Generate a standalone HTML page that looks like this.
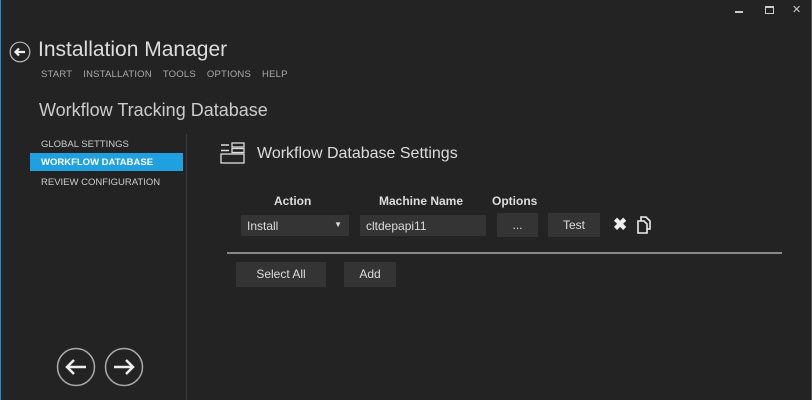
<!DOCTYPE html>
<html><head><style>
body{margin:0;width:812px;height:400px;background:#222322;overflow:hidden;position:relative;font-family:"Liberation Sans",sans-serif;color:#ddd}
.a{position:absolute}
.nav span{margin-right:11px}
.btn{position:absolute;background:#333433;color:#ddd;font-size:12px;text-align:center}
</style></head><body>
<div class="a" style="left:0;top:0;width:1px;height:400px;background:#1e8fd6"></div>
<div class="a" style="right:0;top:0;width:1px;height:400px;background:#555"></div>
<div class="a" style="left:735px;top:11px;width:8px;height:2px;background:#ccc"></div>
<div class="a" style="left:765px;top:6px;width:7px;height:5px;border:1px solid #ccc;border-top-width:2px"></div>
<div class="a" style="left:792px;top:3px;font-size:11px;color:#ccc">✕</div>
<svg class="a" style="left:9px;top:41px" width="22" height="22" viewBox="0 0 22 22"><circle cx="11" cy="11" r="9.8" fill="none" stroke="#bbb" stroke-width="1.2"/><path d="M16 11H6.5M10 7.5L6.5 11l3.5 3.5" fill="none" stroke="#eee" stroke-width="2.2"/></svg>
<div class="a" style="left:38px;top:38px;font-size:21px;color:#ddd">Installation Manager</div>
<div class="a nav" style="left:41px;top:69px;font-size:9.5px;color:#aaa;letter-spacing:0.2px"><span>START</span><span>INSTALLATION</span><span>TOOLS</span><span>OPTIONS</span><span>HELP</span></div>
<div class="a" style="left:39px;top:100px;font-size:18px;color:#ccc">Workflow Tracking Database</div>
<div class="a" style="left:41px;top:139px;font-size:9.5px;color:#ccc">GLOBAL SETTINGS</div>
<div class="a" style="left:30px;top:153px;width:153px;height:18px;background:#1fa0e0"></div>
<div class="a" style="left:41px;top:157px;font-size:9.5px;color:#fff;font-weight:bold">WORKFLOW DATABASE</div>
<div class="a" style="left:41px;top:177px;font-size:9.5px;color:#ccc">REVIEW CONFIGURATION</div>
<div class="a" style="left:186px;top:134px;width:1px;height:266px;background:#3a3b3a"></div>
<svg class="a" style="left:56px;top:347px" width="90" height="40" viewBox="0 0 90 40"><circle cx="20" cy="20" r="18.5" fill="none" stroke="#aaa" stroke-width="1.5"/><path d="M30 20H11M18 13l-7 7 7 7" fill="none" stroke="#eee" stroke-width="2.5"/><circle cx="68" cy="20" r="18.5" fill="none" stroke="#aaa" stroke-width="1.5"/><path d="M58 20h19M70 13l7 7-7 7" fill="none" stroke="#eee" stroke-width="2.5"/></svg>
<svg class="a" style="left:220px;top:142px" width="28" height="30" viewBox="0 0 28 30"><g fill="none" stroke="#ddd" stroke-width="1.3"><rect x="12" y="1" width="12" height="4"/><rect x="12" y="6.5" width="12" height="4"/><rect x="1" y="12" width="23" height="9"/></g><path d="M1 3h8M1 8.5h8M1 10.5h0" stroke="#ddd" stroke-width="1.5"/></svg>
<div class="a" style="left:257px;top:145px;font-size:16px;color:#ddd">Workflow Database Settings</div>
<div class="a" style="left:274px;top:194px;font-size:12px;font-weight:bold">Action</div>
<div class="a" style="left:379px;top:194px;font-size:12px;font-weight:bold">Machine Name</div>
<div class="a" style="left:492px;top:194px;font-size:12px;font-weight:bold">Options</div>
<div class="btn" style="left:241px;top:215px;width:108px;height:21px;text-align:left"><span style="position:absolute;left:6px;top:4px">Install</span><span style="position:absolute;right:7px;top:5px;font-size:8px;line-height:10px">▼</span></div>
<div class="btn" style="left:360px;top:215px;width:126px;height:21px;text-align:left"><span style="position:absolute;left:6px;top:4px">cltdepapi11</span></div>
<div class="btn" style="left:497px;top:213px;width:41px;height:24px;line-height:24px">...</div>
<div class="btn" style="left:548px;top:213px;width:52px;height:24px;line-height:24px">Test</div>
<div class="a" style="left:613px;top:215px;font-size:17px;font-weight:bold;color:#eee">✖</div>
<svg class="a" style="left:636px;top:216px" width="15" height="18" viewBox="0 0 15 18"><path d="M2 5h6l3 3v9H2z M5 5V1h5l4 4v8h-3" fill="none" stroke="#eee" stroke-width="1.6"/></svg>
<div class="a" style="left:227px;top:252px;width:555px;height:2px;background:#888"></div>
<div class="btn" style="left:236px;top:262px;width:90px;height:25px;line-height:25px">Select All</div>
<div class="btn" style="left:344px;top:262px;width:52px;height:25px;line-height:25px">Add</div>
</body></html>
